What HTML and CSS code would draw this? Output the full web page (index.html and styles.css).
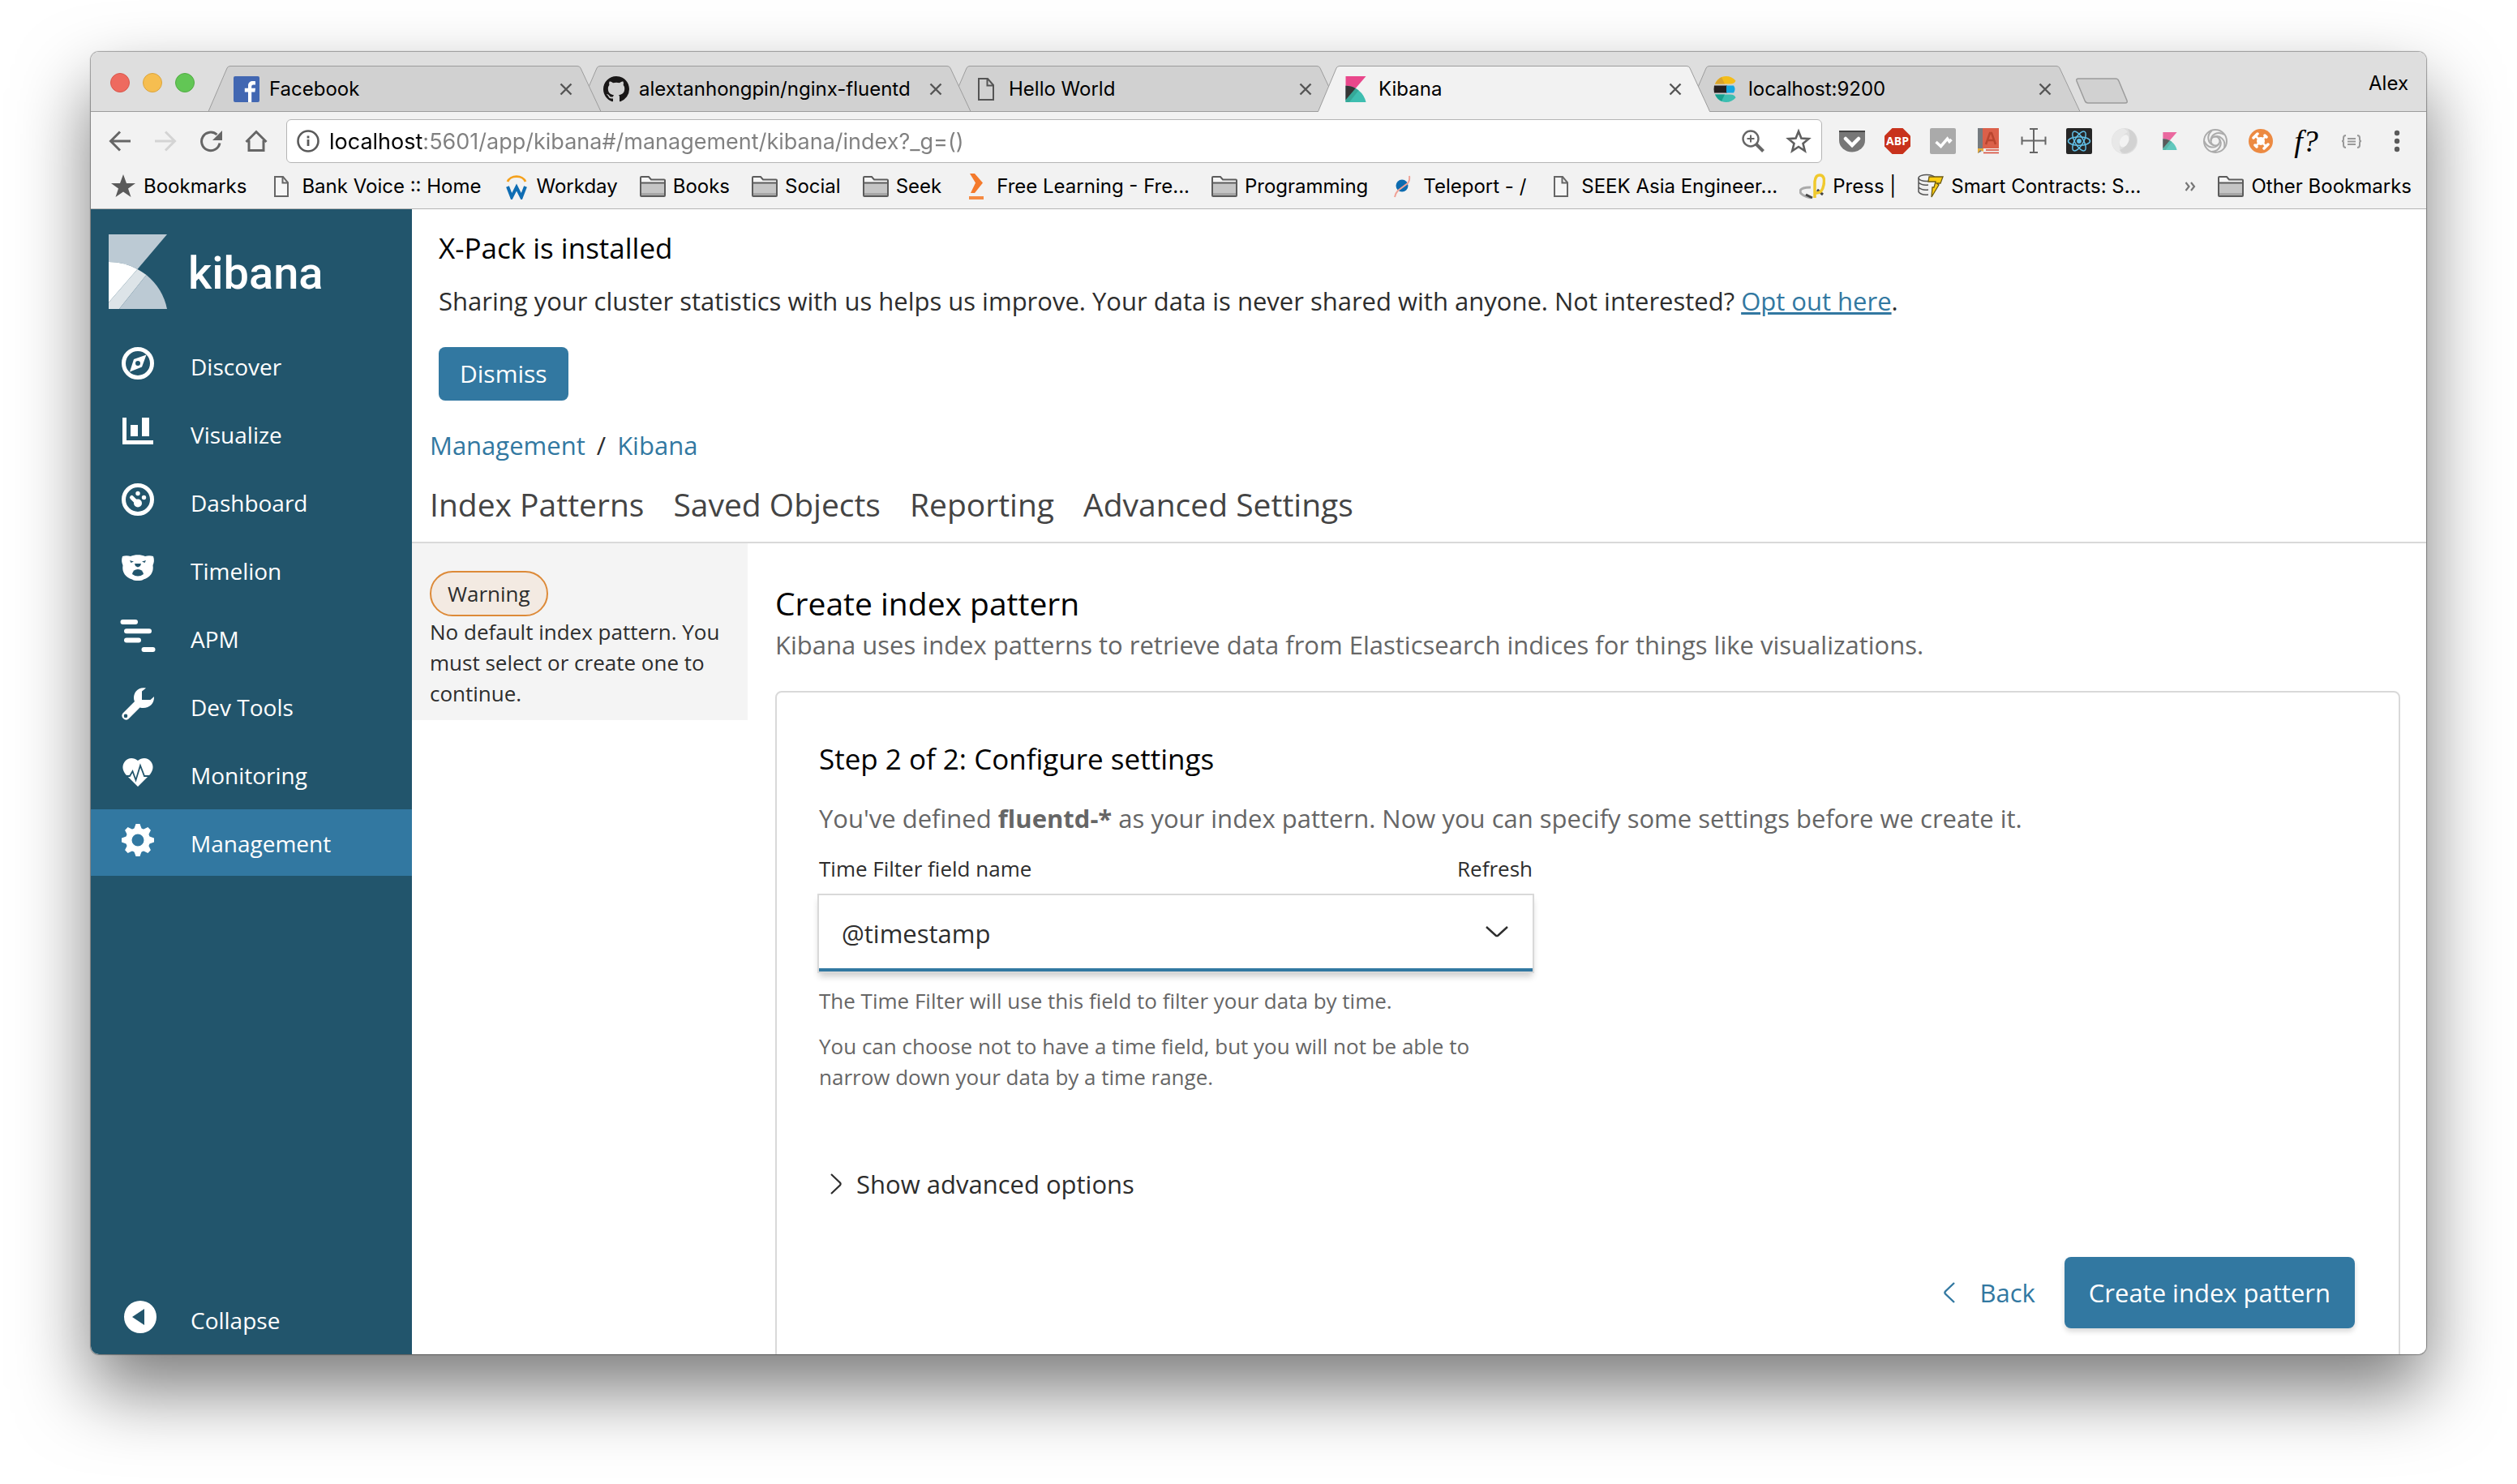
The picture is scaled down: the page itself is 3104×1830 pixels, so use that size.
FILE: index.html
```html
<!DOCTYPE html>
<html lang="en">
<head>
<meta charset="utf-8">
<title>Kibana</title>
<link rel="stylesheet" href="styles.css">
</head>
<body>
<svg class="sprite" aria-hidden="true">
  <symbol id="close" viewBox="0 0 16 16"><path d="M1.5 1.5l13 13M14.500 1.500l-13 13" stroke="#555" stroke-width="2.400" fill="none"/></symbol>
  <symbol id="tab-off" viewBox="0 0 484 57" preserveAspectRatio="none"><path d="M0 56.500L23 3Q24 .5 27 .5H455Q458 .5 459 3L484 56.500" fill="#d1d1d1" stroke="#9c9c9c"/><path d="M0 56.500H484" stroke="#9c9c9c"/></symbol>
  <symbol id="tab-on" viewBox="0 0 484 57" preserveAspectRatio="none"><path d="M0 57Q1 56 2 53L23 3Q24 .5 27 .5H455Q458 .5 459 3L482 53Q483 56 484 57" fill="#f2f2f2" stroke="#9c9c9c"/></symbol>
  <symbol id="doc" viewBox="0 0 32 32"><path d="M8 4h10l6 7v17H8z" fill="#f6f6f6" stroke="#666" stroke-width="2"/><path d="M17.500 4v7.500H24" fill="none" stroke="#666" stroke-width="2"/></symbol>
  <symbol id="folder" viewBox="0 0 32 32"><path d="M1 27V5q0-1 1-1h9l3 4h16q1 0 1 1v18q0 1-1 1H2q-1 0-1-1z" fill="#f6f6f6"/><path d="M1 12h30v15H1z" fill="#c5c5c5"/><path d="M2 25.500h28" stroke="#a6a6a6" stroke-width="3"/><path d="M1 11.500h30M1 27V5q0-1 1-1h9l3 3.500h16q1 0 1 1V27q0 1-1 1H2q-1 0-1-1z" fill="none" stroke="#5c5c5c" stroke-width="2"/></symbol>
  <symbol id="kibana-color" viewBox="0 0 72 92"><path d="M0 0h72L0 84z" fill="#e9478b"/><path d="M0 34A74 74 0 0 1 72 92H0z" fill="#3ebeb0"/><path d="M35 43Q41 46 46 50L13 92H0v-8z" fill="#35a898"/><path d="M0 34Q20 34 35 43L0 84z" fill="#353535"/></symbol>
</svg>

<div class="window">
  <header class="chrome">
    <div class="tabstrip">
      <div class="lights"><i class="light red"></i><i class="light yellow"></i><i class="light green"></i></div>
      <div class="tabs">
        <div class="tab">
          <svg class="tab-shape"><use href="#tab-off"/></svg>
          <svg class="icon" viewBox="0 0 32 32"><rect width="32" height="32" rx="2" fill="#4267b2"/><path d="M18 32V19.600h-4.200v-4.800H18v-3.100C18 7.900 20.400 6 24 6c1.500 0 2.600.1 3 .2v4.200h-2.400c-2 0-2.400 1-2.400 2.300v2.100H27l-.6 4.800h-4.200V32z" fill="#fff"/></svg>
          <span class="tab-title">Facebook</span>
          <button class="tab-close" aria-label="Close tab"><svg><use href="#close"/></svg></button>
        </div>
        <div class="tab">
          <svg class="tab-shape"><use href="#tab-off"/></svg>
          <svg class="icon" viewBox="0 0 16 16"><path fill="#191717" d="M8 0C3.580 0 0 3.580 0 8c0 3.540 2.290 6.530 5.470 7.590.4.070.55-.17.55-.38 0-.19-.01-.82-.01-1.490-2.010.37-2.530-.49-2.690-.94-.09-.23-.48-.94-.82-1.130-.28-.15-.68-.52-.01-.53.63-.01 1.080.58 1.230.82.72 1.210 1.870.87 2.330.66.07-.52.28-.87.51-1.070-1.780-.2-3.640-.89-3.640-3.950 0-.87.31-1.590.82-2.150-.08-.2-.36-1.020.08-2.120 0 0 .67-.21 2.200.82.64-.18 1.320-.27 2-.27s1.360.09 2 .27c1.530-1.040 2.200-.82 2.200-.82.44 1.100.16 1.920.08 2.120.51.56.82 1.270.82 2.150 0 3.070-1.870 3.750-3.650 3.950.29.25.54.73.54 1.480 0 1.070-.01 1.930-.01 2.200 0 .21.15.46.55.38A8.010 8.010 0 0 0 16 8c0-4.420-3.580-8-8-8z"/></svg>
          <span class="tab-title">alextanhongpin/nginx-fluentd</span>
          <button class="tab-close" aria-label="Close tab"><svg><use href="#close"/></svg></button>
        </div>
        <div class="tab">
          <svg class="tab-shape"><use href="#tab-off"/></svg>
          <svg class="icon" viewBox="0 0 32 32"><path d="M7 3h11l7 8v18H7zM17.500 3v8.500H25" fill="none" stroke="#555" stroke-width="2"/></svg>
          <span class="tab-title">Hello World</span>
          <button class="tab-close" aria-label="Close tab"><svg><use href="#close"/></svg></button>
        </div>
        <div class="tab active">
          <svg class="tab-shape"><use href="#tab-on"/></svg>
          <svg class="icon"><use href="#kibana-color"/></svg>
          <span class="tab-title">Kibana</span>
          <button class="tab-close" aria-label="Close tab"><svg><use href="#close"/></svg></button>
        </div>
        <div class="tab">
          <svg class="tab-shape"><use href="#tab-off"/></svg>
          <svg class="icon" viewBox="0 0 32 32"><path d="M3 9.500C5 4 10 0 16.500 0c5 0 9 2 12 5.500-1 2.500-3 4-6.500 4z" fill="#f4bd19"/><path d="M3 9.500C5 5.500 8 2.500 11 1.200L15 9.500z" fill="#d9a32c"/><path d="M2 11.500h16v9H2q-1-4.500 0-9z" fill="#231f20"/><path d="M17 11.500h9q3 4.500 0 9h-9z" fill="#14a7df"/><path d="M3 22.500C5 28 10 32 16.500 32c5 0 9-2 12-5.500-1-2.500-3-4-6.500-4z" fill="#3cbeb1"/><path d="M3 22.500C5 26.500 8 29.500 11 30.800l4-8.300z" fill="#17a08e"/></svg>
          <span class="tab-title">localhost:9200</span>
          <button class="tab-close" aria-label="Close tab"><svg><use href="#close"/></svg></button>
        </div>
        <button class="new-tab" aria-label="New tab"><svg viewBox="0 0 66 33"><path d="M2 4Q1 1 4 1H50q3 0 4 3l10 24q1 3-2 3H16q-3 0-4-3z" fill="#d1d1d1" stroke="#9c9c9c" stroke-width="1.500"/></svg></button>
      </div>
      <button class="profile">Alex</button>
    </div>

    <div class="toolbar">
      <button class="tool" aria-label="Back"><svg viewBox="0 0 32 32"><path d="M29 16H5M16 4.500L4.500 16 16 27.500" fill="none" stroke="#666" stroke-width="3"/></svg></button>
      <button class="tool" aria-label="Forward"><svg viewBox="0 0 32 32"><path d="M3 16h24M16 4.500L27.500 16 16 27.500" fill="none" stroke="#d4d4d4" stroke-width="3"/></svg></button>
      <button class="tool" aria-label="Reload"><svg viewBox="0 0 32 32"><path d="M27 18.500A11.300 11.300 0 1 1 23.500 8" fill="none" stroke="#666" stroke-width="3"/><path d="M30 3v12H18z" fill="#666"/></svg></button>
      <button class="tool" aria-label="Home"><svg viewBox="0 0 32 32"><path d="M3.500 17L16 4.500 28.500 17M7 15v12.500h18V15" fill="none" stroke="#666" stroke-width="3"/></svg></button>
      <div class="omnibox">
        <svg class="info" viewBox="0 0 28 28"><circle cx="14" cy="14" r="12.500" fill="none" stroke="#5a5a5a" stroke-width="2.600"/><path d="M14 12v8M14 7.500v3" stroke="#5a5a5a" stroke-width="2.800"/></svg>
        <input class="url" type="text" aria-label="Address" value="localhost:5601/app/kibana#/management/kibana/index?_g=()">
        <button class="tool" aria-label="Zoom"><svg viewBox="0 0 32 32"><circle cx="13" cy="13" r="9.500" fill="none" stroke="#666" stroke-width="2.400"/><path d="M13 8.500v9M8.500 13h9" stroke="#666" stroke-width="2"/><path d="M19.500 19.500l9 9" stroke="#666" stroke-width="4"/></svg></button>
        <button class="tool" aria-label="Bookmark this page"><svg viewBox="0 0 32 32"><path d="M16 4l3.400 8.600 9.100.6-7 5.800 2.300 9L16 23l-7.800 5 2.300-9-7-5.800 9.100-.6z" fill="none" stroke="#5f5f5f" stroke-width="2.600"/></svg></button>
      </div>
      <div class="extensions">
        <button class="tool" aria-label="Pocket"><svg viewBox="0 0 32 32"><path d="M0 3h32v12a16 14.500 0 0 1-32 0z" fill="#777"/><path d="M0 3h32v2H0z" fill="#444"/><path d="M8 13l8 8 8-8" fill="none" stroke="#fff" stroke-width="4.500" stroke-linecap="round"/></svg></button>
        <button class="tool abp" aria-label="Adblock Plus"><svg viewBox="0 0 32 32"><path d="M9.500 0h13L32 9.500v13L22.500 32h-13L0 22.500v-13z" fill="#c8321c"/><text x="16" y="21" text-anchor="middle" class="abp-text">ABP</text></svg></button>
        <button class="tool" aria-label="Checker"><svg viewBox="0 0 32 32"><rect width="32" height="32" rx="2" fill="#aaa"/><path d="M7.500 17l6 5.500 8-9.500 2.500 3.500 2.500-2.500" fill="none" stroke="#fff" stroke-width="3.500"/></svg></button>
        <button class="tool" aria-label="Dictionary"><svg viewBox="0 0 32 32"><path d="M3 0h6v28l-6 3z" fill="#757b80"/><path d="M9 0h20v25H9z" fill="#db604a"/><path d="M9 26h20v5H6z" fill="#eee"/><path d="M10 30.500h19M13 27h16" stroke="#d84a36" stroke-width="1.500"/><path d="M3 25h7v4l-4-2-3 4z" fill="#e9ad3a"/><path d="M13 20L18 6h2l5 14M15 15h8" fill="none" stroke="#b9452f" stroke-width="2.500"/></svg></button>
        <button class="tool" aria-label="Ruler"><svg viewBox="0 0 32 32"><path d="M16 1v29M1 15.500h30M11 1h10M11 30h10M1.500 10.500v10M30.500 10.500v10" stroke="#666" stroke-width="2" fill="none"/></svg></button>
        <button class="tool" aria-label="React Developer Tools"><svg viewBox="0 0 32 32"><rect width="32" height="32" rx="2" fill="#262626"/><g fill="none" stroke="#61bfe6" stroke-width="1.500"><ellipse cx="16" cy="16" rx="13.500" ry="5.300"/><ellipse cx="16" cy="16" rx="13.500" ry="5.300" transform="rotate(60 16 16)"/><ellipse cx="16" cy="16" rx="13.500" ry="5.300" transform="rotate(120 16 16)"/></g><circle cx="16" cy="16" r="2.900" fill="#61bfe6"/></svg></button>
        <button class="tool" aria-label="Ring"><svg viewBox="0 0 32 32"><circle cx="16" cy="16" r="11" fill="none" stroke="#dedede" stroke-width="10"/><path d="M13 .5C-4 5-4 27 13 31.500 7 24 9 10 20 5 18 2 16 .5 13 .5z" fill="#e8e8e8"/><path d="M20 1c16 5 14 27-3 30-3 0-5-1-7-4C22 22 25 9 20 1z" fill="#d2d2d2"/><ellipse cx="15.500" cy="16" rx="5" ry="8" transform="rotate(25 16 16)" fill="#f2f2f2"/></svg></button>
        <button class="tool faded" aria-label="Kibana"><svg class="small"><use href="#kibana-color"/></svg></button>
        <button class="tool" aria-label="Swirl"><svg viewBox="0 0 32 32"><g fill="none" stroke="#ababab" stroke-width="2"><circle cx="16" cy="16" r="14"/><circle cx="16" cy="16" r="5.500"/><path id="arm" d="M10.500 16C10 8 19 3 27 8"/><use href="#arm" transform="rotate(72 16 16)"/><use href="#arm" transform="rotate(144 16 16)"/><use href="#arm" transform="rotate(216 16 16)"/><use href="#arm" transform="rotate(288 16 16)"/></g></svg></button>
        <button class="tool" aria-label="Node"><svg viewBox="0 0 32 32"><circle cx="16" cy="16" r="15" fill="#ec8a42"/><circle cx="16" cy="16" r="5" fill="#fff"/><path d="M10 10l12 12M22 10L10 22" stroke="#fff" stroke-width="2.500"/><path d="M7 12l5-5M20 25l5-5M21 9l2 2M9 21l2 2" stroke="#fff" stroke-width="3.500" stroke-linecap="round"/></svg></button>
        <button class="tool fq" aria-label="What font">f?</button>
        <button class="tool" aria-label="Snippet"><svg viewBox="0 0 32 32"><path d="M9 9q-3 0-3 3v2q0 2-2 2 2 0 2 2v3q0 3 3 3M23 9q3 0 3 3v2q0 2 2 2-2 0-2 2v3q0 3-3 3M11 13h10M11 16.500h10M11 20h10" fill="none" stroke="#999" stroke-width="2"/></svg></button>
        <button class="tool" aria-label="Menu"><svg viewBox="0 0 32 32"><circle cx="16" cy="6" r="3.200" fill="#5a5a5a"/><circle cx="16" cy="16" r="3.200" fill="#5a5a5a"/><circle cx="16" cy="26" r="3.200" fill="#5a5a5a"/></svg></button>
      </div>
    </div>

    <nav class="bookmarks" aria-label="Bookmarks">
      <a href="#"><svg class="icon" viewBox="0 0 32 32"><path d="M16 1l4 11h11l-9 6.500L25.500 29 16 22.500 6.500 29 10 18.500 1 12h11z" fill="#5a5a5a"/></svg>Bookmarks</a>
      <a href="#"><svg class="icon"><use href="#doc"/></svg>Bank Voice :: Home</a>
      <a href="#"><svg class="icon" viewBox="0 0 32 32"><path d="M5 10a11.500 9 0 0 1 22 0" fill="none" stroke="#f5a11c" stroke-width="2.800"/><path d="M5 16l5 13 6-12 6 12 5-13" fill="none" stroke="#0f6db3" stroke-width="4"/></svg>Workday</a>
      <a href="#"><svg class="icon"><use href="#folder"/></svg>Books</a>
      <a href="#"><svg class="icon"><use href="#folder"/></svg>Social</a>
      <a href="#"><svg class="icon"><use href="#folder"/></svg>Seek</a>
      <a href="#"><svg class="icon" viewBox="0 0 32 32"><path d="M8 0h6l10 11.500L14 24H9l6-12.500z" fill="#f47a2c"/><path d="M7 28h18v4H7z" fill="#f58a42"/></svg>Free Learning - Fre...</a>
      <a href="#"><svg class="icon"><use href="#folder"/></svg>Programming</a>
      <a href="#"><svg class="icon" viewBox="0 0 32 32"><circle cx="15" cy="15" r="7.500" fill="#0d6cb0"/><path d="M24 3q1 5-2 9L10 21q-3 3-4 8" fill="none" stroke="#f0a296" stroke-width="2"/></svg>Teleport - /</a>
      <a href="#"><svg class="icon"><use href="#doc"/></svg>SEEK Asia Engineer...</a>
      <a href="#"><svg class="icon" viewBox="0 0 32 32"><path d="M14 17Q1 17 1 22t13 8" fill="none" stroke="#aaa" stroke-width="3"/><path d="M8 26l8 4M22 20l7 6" stroke="#444" stroke-width="3"/><path d="M19 30V10Q20 1 26 2t4 12-10 10" fill="none" stroke="#f0c92e" stroke-width="3.500"/></svg>Press |</a>
      <a href="#"><svg class="icon" viewBox="0 0 32 32"><path d="M1 6v16c0 3 6 5 12 4V9z" fill="#eee"/><g fill="none" stroke="#555" stroke-width="1.500"><ellipse cx="11" cy="5.500" rx="10" ry="4"/><path d="M1 5.500v17q3 4.500 12 3.500M1 11q4 4 12 3M1 17q4 4 12 3M21 5.500V9"/></g><path d="M14 4h17l-3 8h-5l3 2-9 15 1-12h2l2-7h-9z" fill="#ffce12" stroke="#6b5a12" stroke-width="1.300"/></svg>Smart Contracts: S...</a>
      <button class="overflow" aria-label="More bookmarks"><svg viewBox="0 0 14 12"><path d="M1.500 1l4 5-4 5M8 1l4 5-4 5" fill="none" stroke="#777" stroke-width="2.200"/></svg></button>
      <a href="#"><svg class="icon"><use href="#folder"/></svg>Other Bookmarks</a>
    </nav>
  </header>

  <div class="app">
    <aside class="sidebar">
      <a class="brand" href="#">
        <svg viewBox="0 0 72 92"><path d="M0 0h72L35.500 43Q20 34 0 34z" fill="#bccad4"/><path d="M0 34Q20 34 35.500 43L0 84z" fill="#fff"/><path d="M35.500 43Q41 46 46.500 50L13 92H0v-8z" fill="#dde4e8"/><path d="M46.500 50Q67 67 72 92H13z" fill="#bccad4"/></svg>
        <span>kibana</span>
      </a>
      <nav class="menu">
        <a href="#"><svg viewBox="0 0 40 40"><circle cx="20" cy="20" r="17.500" fill="none" stroke="#fff" stroke-width="5"/><path fill-rule="evenodd" d="M30.500 9.500L25 24.500 10 30.500 15 15zM20 17a3 3 0 1 0 0 6 3 3 0 0 0 0-6z" fill="#fff"/></svg>Discover</a>
        <a href="#"><svg viewBox="0 0 40 40"><path d="M1 3h5v28h33v5H1zM11 12h9v14h-9zM25 3h9v23h-9z" fill="#fff"/></svg>Visualize</a>
        <a href="#"><svg viewBox="0 0 40 40"><circle cx="20" cy="20" r="17.500" fill="none" stroke="#fff" stroke-width="5"/><circle cx="20" cy="12.500" r="2.700" fill="#fff"/><circle cx="27.500" cy="17.500" r="2.700" fill="#fff"/><circle cx="20" cy="24.500" r="5" fill="#fff"/><path d="M12.500 17.500l6 6" stroke="#fff" stroke-width="5" stroke-linecap="round"/></svg>Dashboard</a>
        <a href="#"><svg viewBox="0 0 40 40"><path d="M1 6c3-1 7-1 10 0 5-2.500 13-2.500 18 0 3-1 7-1 10 0 1.500 4 1 8-.5 11 1.500 9-3.500 15-11.500 17.500-2 2-12 2-14 0C5 32 0 26 1.500 17 0 14 -.5 10 1 6z" fill="#fff"/><g fill="#22556c"><path d="M10 11l5 1.500-3.500 1.500zM30 11l-5 1.500 3.500 1.500zM16 15h8l-1 3-3 1.500-3-1.500z"/><path d="M13 28q1-6 7-6t7 6q-7 5-14 0z"/></g></svg>Timelion</a>
        <a href="#"><svg viewBox="0 0 40 40"><path d="M1.500 3h15.500M6 14.300h28M6 25.600h15M27.500 37H38.500" stroke="#fff" stroke-width="6" stroke-linecap="round"/></svg>APM</a>
        <a href="#"><svg viewBox="0 0 40 40"><path fill-rule="evenodd" d="M30 .5C21-1.500 15 5 15 12.500q0 3 1 4.500L1.500 31.500a5 5 0 0 0 7 7L22.500 24.500C32 27 40.500 21 40 11l-4.500 4H25V4.500zM5 32.600a2.300 2.300 0 1 1 0 4.600 2.300 2.300 0 0 1 0-4.600z" fill="#fff"/></svg>Dev Tools</a>
        <a href="#"><svg viewBox="0 0 40 40"><path d="M20 6C15 2 8 2 4 7c-4 5-3 11 1 16l15 15 15-15c4-5 5-11 1-16-4-5-11-5-16-1z" fill="#fff"/><path d="M2 25h8l3.500-6L17.500 30 23 12l5 13h11" fill="none" stroke="#22556c" stroke-width="1.800"/></svg>Monitoring</a>
        <a href="#" class="current"><svg viewBox="0 0 40 40"><circle cx="20" cy="20" r="11.300" fill="none" stroke="#fff" stroke-width="7.600"/><g fill="#fff"><path id="tooth" d="M17.500 0h5L25 7H15z"/><use href="#tooth" transform="rotate(45 20 20)"/><use href="#tooth" transform="rotate(90 20 20)"/><use href="#tooth" transform="rotate(135 20 20)"/><use href="#tooth" transform="rotate(180 20 20)"/><use href="#tooth" transform="rotate(225 20 20)"/><use href="#tooth" transform="rotate(270 20 20)"/><use href="#tooth" transform="rotate(315 20 20)"/></g></svg>Management</a>
        <button class="collapse"><svg viewBox="0 0 40 40"><path fill-rule="evenodd" d="M20 0a20 20 0 1 0 0 40 20 20 0 0 0 0-40zM25 10v20L10 20z" fill="#fff"/></svg>Collapse</button>
      </nav>
    </aside>

    <main class="main">
      <section class="banner">
        <h2>X-Pack is installed</h2>
        <p>Sharing your cluster statistics with us helps us improve. Your data is never shared with anyone. Not interested? <a href="#">Opt out here</a>.</p>
        <button class="dismiss">Dismiss</button>
      </section>
      <nav class="crumbs" aria-label="Breadcrumb"><a href="#">Management</a><span>/</span><a href="#">Kibana</a></nav>
      <nav class="sections"><a href="#">Index Patterns</a><a href="#">Saved Objects</a><a href="#">Reporting</a><a href="#">Advanced Settings</a></nav>

      <div class="columns">
        <aside class="notice">
          <span class="badge">Warning</span>
          <p>No default index pattern. You must select or create one to continue.</p>
        </aside>
        <section class="content">
          <h1>Create index pattern</h1>
          <p class="lead">Kibana uses index patterns to retrieve data from Elasticsearch indices for things like visualizations.</p>
          <form class="panel">
            <h2>Step 2 of 2: Configure settings</h2>
            <p class="defined">You've defined <strong>fluentd-*</strong> as your index pattern. Now you can specify some settings before we create it.</p>
            <div class="field">
              <div class="field-head"><label for="time-field">Time Filter field name</label><a href="#">Refresh</a></div>
              <div class="select-wrap">
                <select id="time-field"><option>@timestamp</option></select>
                <svg class="caret" viewBox="0 0 28 14"><path d="M1 1l11.500 10.500q1.500 1.200 3 0L27 1" fill="none" stroke="#2d2d2d" stroke-width="2.400"/></svg>
              </div>
              <p>The Time Filter will use this field to filter your data by time.</p>
              <p>You can choose not to have a time field, but you will not be able to narrow down your data by a time range.</p>
            </div>
            <button type="button" class="advanced"><svg viewBox="0 0 14 26"><path d="M1 1l11 10.500q1.200 1.500 0 3L1 25" fill="none" stroke="#2d2d2d" stroke-width="2.200"/></svg>Show advanced options</button>
            <div class="actions">
              <button type="button" class="back"><svg viewBox="0 0 14 26"><path d="M13 1L2 11.500q-1.200 1.500 0 3L13 25" fill="none" stroke="#3278a1" stroke-width="2.400"/></svg>Back</button>
              <button type="button" class="create">Create index pattern</button>
            </div>
          </form>
        </section>
      </div>
    </main>
  </div>
</div>
</body>
</html>
```

FILE: styles.css
```css
* { box-sizing: border-box; }

body {
  margin: 0;
  height: 100vh;
  padding: 64px 112px 160px;
  background: #fff;
  font-family: "Open Sans", sans-serif;
  font-size: 31px;
  line-height: 48px;
  color: #2d2d2d;
}

h1, h2, p { margin: 0; font-weight: 400; }
a { color: #3278a1; text-decoration: none; }
button {
  padding: 0;
  border: 0;
  background: none;
  font: inherit;
  color: inherit;
}
svg { display: block; flex: none; }
.sprite { position: absolute; width: 0; height: 0; }
.icon { width: 32px; height: 32px; }

.window {
  display: flex;
  flex-direction: column;
  height: 100%;
  border-radius: 10px;
  overflow: hidden;
  box-shadow: 0 0 1px 1px rgba(0, 0, 0, .35), 0 44px 90px rgba(0, 0, 0, .52);
}

/* Browser chrome */
.chrome {
  font-family: Inter, "Liberation Sans", sans-serif;
  font-size: 24px;
  line-height: 32px;
  color: #000;
  background: #f2f2f2;
  border-bottom: 1px solid #b4b4b4;
}
.tabstrip {
  display: flex;
  height: 74px;
  padding: 0 22px 0 24px;
  background: linear-gradient(#9c9c9c, #9c9c9c) bottom / 100% 1px no-repeat #dedede;
}
.lights { display: flex; gap: 16px; padding-top: 26px; }
.light { width: 24px; height: 24px; border-radius: 50%; }
.red { background: #ee6a5f; border: 1px solid #d9574c; }
.yellow { background: #f6be50; border: 1px solid #dba53d; }
.green { background: #62c655; border: 1px solid #51ac43; }

.tabs { display: flex; flex: 1; min-width: 0; margin-left: 17px; align-items: flex-end; }
.tab {
  position: relative;
  display: flex;
  align-items: center;
  flex: 0 1 484px;
  min-width: 0;
  height: 57px;
  padding: 0 35px 0 31px;
  margin-right: -28px;
  z-index: 4;
}
.tab:nth-child(2) { z-index: 3; }
.tab:nth-child(3) { z-index: 2; }
.tab:nth-child(5) { z-index: 1; }
.tab.active { z-index: 5; }
.tab-shape { position: absolute; inset: 0; width: 100%; height: 100%; z-index: -1; }
.tab-title { flex: 1; min-width: 0; margin-left: 12px; white-space: nowrap; overflow: hidden; }
.tab-close { margin-left: 10px; }
.tab-close svg { width: 16px; height: 16px; }
.new-tab { align-self: center; margin: 22px 0 0 22px; }
.new-tab svg { width: 66px; height: 33px; }
.profile { align-self: center; padding-top: 4px; }

.toolbar { display: flex; align-items: center; padding: 9px 8px 0; }
.tool { display: flex; align-items: center; justify-content: center; width: 56px; height: 52px; }
.tool svg { width: 32px; height: 32px; }
.tool svg.small { width: 18px; height: 22px; }
.faded { opacity: .8; }
.abp-text { font: 700 14px "Open Sans", sans-serif; fill: #fff; }
.fq { font: italic 38px "Liberation Serif", serif; }
.omnibox {
  display: flex;
  align-items: center;
  flex: 1;
  height: 54px;
  margin: 0 9px;
  padding-left: 12px;
  background: #fff;
  border: 1px solid #b5b5b5;
  border-radius: 6px;
}
.info { width: 28px; height: 28px; }
.url {
  flex: 1;
  min-width: 0;
  margin-left: 12px;
  padding: 2px 0 0;
  border: 0;
  outline: 0;
  font: inherit;
  font-size: 27px;
  color: transparent;
  background: linear-gradient(to right, #000 116px, #808080 116px);
  -webkit-background-clip: text;
  background-clip: text;
}
.extensions { display: flex; }

.bookmarks { display: flex; align-items: center; gap: 27px; height: 56px; padding: 2px 18px 0 24px; }
.bookmarks a { display: flex; align-items: center; gap: 9px; white-space: nowrap; color: #000; }
.overflow { margin-left: auto; }
.overflow svg { width: 14px; height: 12px; }

/* Application */
.app { display: flex; flex: 1; min-height: 0; background: #fff; }
.sidebar {
  display: flex;
  flex-direction: column;
  flex: none;
  width: 396px;
  background: #22556c;
  font-size: 28px;
  line-height: 38px;
}
.brand { display: flex; align-items: center; gap: 26px; padding: 31px 22px 29px; color: #fff; }
.brand svg { width: 72px; height: 92px; }
.brand span { padding-top: 4px; font: 500 56px/64px Roboto, sans-serif; }
.menu { display: flex; flex-direction: column; flex: 1; gap: 2px; padding-bottom: 2px; }
.menu a, .collapse {
  display: flex;
  gap: 45px;
  height: 82px;
  padding: 23px 0 0 38px;
  color: #fff;
  text-align: left;
}
.menu svg { width: 40px; height: 40px; margin-top: -5px; overflow: visible; }
.menu .current { background: #3278a1; }
.menu .collapse { margin-top: auto; gap: 42px; padding-left: 41px; }

.main { flex: 1; min-width: 0; overflow-y: auto; scrollbar-width: none; }
.banner { padding: 24px 33px 0; }
.banner h2 { font-size: 35px; color: #000; }
.banner p { margin: 17px 0 33px; }
.banner p a { text-decoration: underline; }
.dismiss {
  display: block;
  height: 66px;
  padding: 0 26px;
  border-radius: 8px;
  background: #3278a1;
  color: #fff;
  font-size: 30px;
}
.crumbs { display: flex; gap: 14px; padding: 31px 22px 0; }
.sections {
  display: flex;
  gap: 36px;
  padding: 21px 22px 18px;
  border-bottom: 2px solid #d9d9d9;
  font-size: 39px;
  line-height: 56px;
}
.sections a { color: #444; }

.columns { display: flex; align-items: flex-start; }
.notice {
  flex: none;
  width: 414px;
  padding: 34px 22px 14px;
  background: #f4f4f4;
  font-size: 26px;
  line-height: 38px;
}
.badge {
  display: block;
  width: fit-content;
  padding: 7px 20px;
  border: 2px solid #dd8a38;
  border-radius: 28px;
  background: #f3eae2;
}
.content { flex: 1; min-width: 0; padding: 50px 32px 32px 34px; }
.content h1 { font-size: 39px; color: #000; }
.lead { margin: 3px 0 33px; color: #666; }
.panel { padding: 58px 54px 56px 52px; border: 2px solid #d9d9d9; border-radius: 8px; }
.panel h2 { font-size: 35px; color: #000; }
.defined { margin: 25px 0 19px; color: #666; }
.field { width: 880px; max-width: 100%; font-size: 26px; line-height: 38px; }
.field-head { display: flex; justify-content: space-between; }
.field-head a { color: #2d2d2d; }
.select-wrap { position: relative; margin: 14px 0 17px; }
.field select {
  display: block;
  width: 100%;
  height: 94px;
  padding: 0 28px;
  border: 0;
  border-radius: 0;
  outline: 0;
  appearance: none;
  background: #fff;
  color: #2d2d2d;
  font: 31px "Open Sans", sans-serif;
  box-shadow: inset 0 -4px #3278a1, 0 0 0 2px #d9d9d9, 0 6px 8px rgba(0, 0, 0, .2);
}
.caret { position: absolute; top: 38px; right: 30px; width: 28px; height: 14px; }
.field p { color: #666; }
.field p + p { margin-top: 18px; }
.advanced { display: flex; align-items: center; gap: 18px; margin: 89px 0 66px; padding-left: 14px; }
.advanced svg, .back svg { width: 14px; height: 26px; }
.actions { display: flex; justify-content: flex-end; gap: 36px; }
.back { display: flex; align-items: center; gap: 30px; color: #3278a1; }
.create {
  height: 88px;
  padding: 0 30px;
  border-radius: 8px;
  background: #3278a1;
  color: #fff;
  box-shadow: 0 4px 6px rgba(0, 0, 0, .15);
}
```
